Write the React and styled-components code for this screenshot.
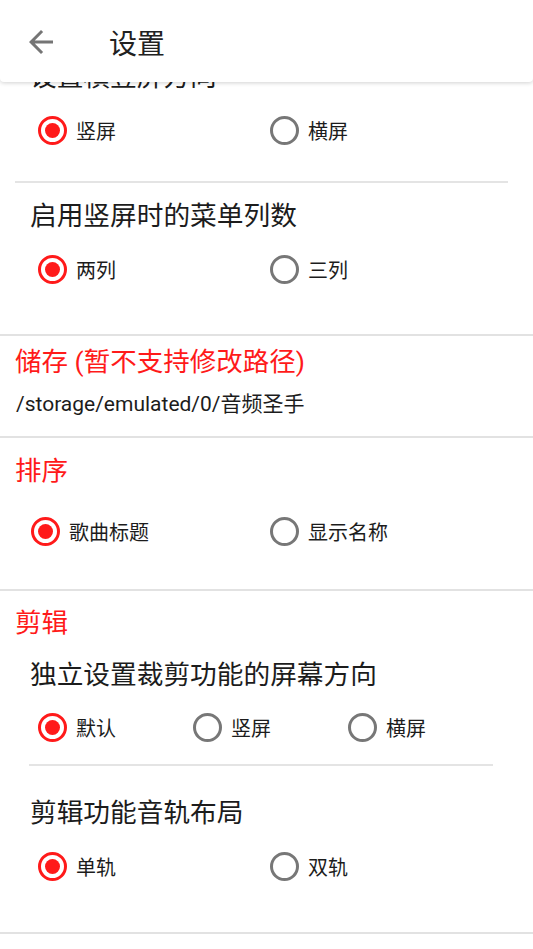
import React, { useState } from "react";
import styled, { createGlobalStyle } from "styled-components";

const RED = "#ff1a1a";

const GlobalStyle = createGlobalStyle`
  body {
    margin: 0;
    background: #fff;
    font-family: Roboto, "Noto Sans CJK SC", sans-serif;
    color: #1c1c1c;
  }
`;

const Screen = styled.div`
  position: relative;
  width: 533px;
  height: 949px;
  overflow: hidden;
  background: #fff;
`;

const AppBar = styled.header`
  position: absolute;
  top: 0;
  left: 0;
  right: 0;
  z-index: 2;
  height: 82px;
  padding-top: 2px;
  box-sizing: border-box;
  display: flex;
  align-items: center;
  background: #fff;
  border-radius: 0 0 4px 4px;
  box-shadow: 0 1px 4px rgba(0, 0, 0, 0.18);
`;

const BackButton = styled.button`
  width: 36px;
  height: 36px;
  margin-left: 23px;
  padding: 0;
  border: 0;
  background: none;
  display: flex;
  align-items: center;
  justify-content: center;
  svg {
    width: 36px;
    height: 36px;
    fill: #757575;
  }
`;

const BarTitle = styled.h1`
  margin: 0 0 0 50px;
  font-size: 28px;
  font-weight: 400;
  color: #212121;
`;

const List = styled.main`
  padding-top: 59px;
`;

const Category = styled.section`
  border-bottom: 2px solid #e2e2e2;
  padding-bottom: ${(p) => p.$pb || 0}px;
`;

const CategoryTitle = styled.h2`
  margin: ${(p) => p.$top}px 0 0;
  padding-left: 15px;
  font-size: 26.5px;
  line-height: 36px;
  font-weight: 400;
  color: ${RED};
`;

const Summary = styled.div`
  margin-top: 10px;
  padding-left: 16px;
  font-size: 21px;
  line-height: 28px;
  color: #1c1c1c;
`;

const Pref = styled.div`
  padding-top: ${(p) => p.$pt}px;
  padding-bottom: ${(p) => p.$pb}px;
`;

const PrefTitle = styled.div`
  padding-left: 30px;
  font-size: 26.7px;
  line-height: 36px;
  color: #1c1c1c;
`;

const Divider = styled.hr`
  margin: 0 ${(p) => p.$right}px 0 ${(p) => p.$left}px;
  height: 2px;
  border: 0;
  background: #e4e4e4;
`;

const Group = styled.div`
  display: grid;
  grid-template-columns: repeat(${(p) => p.$cols}, 1fr);
  height: 36px;
  margin: ${(p) => p.$top}px ${(p) => p.$right}px 0 ${(p) => p.$left}px;
`;

const Option = styled.label`
  display: flex;
  align-items: center;
  gap: 9px;
  font-size: 20px;
  color: #1c1c1c;
  cursor: pointer;
`;

const Circle = styled.span`
  width: 29px;
  height: 29px;
  box-sizing: border-box;
  border-radius: 50%;
  border: 3px solid ${(p) => (p.$on ? RED : "#777")};
  display: flex;
  align-items: center;
  justify-content: center;
  &::after {
    content: "";
    width: 15px;
    height: 15px;
    border-radius: 50%;
    background: ${RED};
    display: ${(p) => (p.$on ? "block" : "none")};
  }
`;

const RadioGroup = ({ options, initial = 0, top, left, right }) => {
  const [value, setValue] = useState(initial);
  return (
    <Group $cols={options.length} $top={top} $left={left} $right={right}>
      {options.map((o, i) => (
        <Option key={o} onClick={() => setValue(i)}>
          <Circle $on={value === i} />
          {o}
        </Option>
      ))}
    </Group>
  );
};

const App = () => {
  return (
    <Screen>
      <GlobalStyle />
      <AppBar>
        <BackButton aria-label="返回">
          <svg viewBox="0 0 24 24">
            <path d="M20 11H7.83l5.59-5.59L12 4l-8 8 8 8 1.41-1.41L7.83 13H20v-2z" />
          </svg>
        </BackButton>
        <BarTitle>设置</BarTitle>
      </AppBar>

      <List>
        <Category>
          <Pref $pt={0} $pb={33}>
            <PrefTitle>设置横竖屏方向</PrefTitle>
            <RadioGroup options={["竖屏", "横屏"]} top={17} left={38} right={31} />
          </Pref>
          <Divider $left={15} $right={25} />
          <Pref $pt={15} $pb={47}>
            <PrefTitle>启用竖屏时的菜单列数</PrefTitle>
            <RadioGroup options={["两列", "三列"]} top={17} left={38} right={31} />
          </Pref>
        </Category>

        <Category $pb={18}>
          <CategoryTitle $top={8}>储存 (暂不支持修改路径)</CategoryTitle>
          <Summary>/storage/emulated/0/音频圣手</Summary>
        </Category>

        <Category $pb={40}>
          <CategoryTitle $top={15}>排序</CategoryTitle>
          <RadioGroup options={["歌曲标题", "显示名称"]} top={24} left={31} right={24} />
        </Category>

        <Category>
          <CategoryTitle $top={14}>剪辑</CategoryTitle>
          <Pref $pt={16} $pb={19}>
            <PrefTitle>独立设置裁剪功能的屏幕方向</PrefTitle>
            <RadioGroup options={["默认", "竖屏", "横屏"]} top={16} left={38} right={30} />
          </Pref>
          <Divider $left={29} $right={40} />
          <Pref $pt={29} $pb={48}>
            <PrefTitle>剪辑功能音轨布局</PrefTitle>
            <RadioGroup options={["单轨", "双轨"]} top={17} left={38} right={31} />
          </Pref>
        </Category>
      </List>
    </Screen>
  );
};

export default App;
